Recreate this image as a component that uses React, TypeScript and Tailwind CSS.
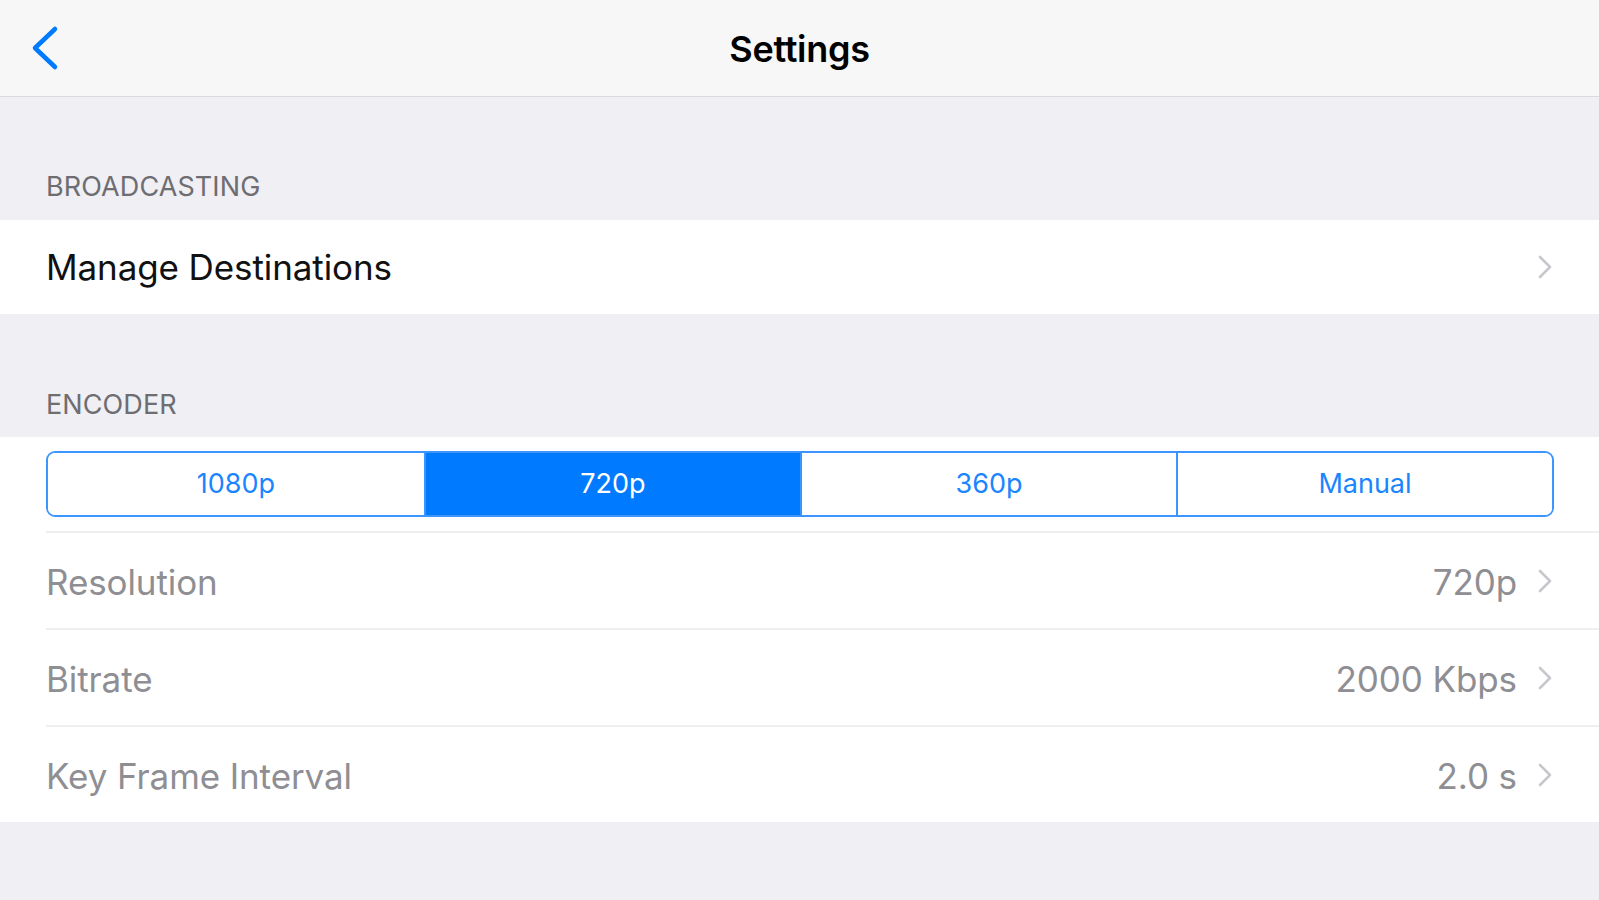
const rows = [
  { label: "Resolution", value: "720p" },
  { label: "Bitrate", value: "2000 Kbps" },
  { label: "Key Frame Interval", value: "2.0 s" },
];

const presets = ["1080p", "720p", "360p", "Manual"];

const Chevron = () => (
  <svg width="16" height="28" viewBox="0 0 16 28" fill="none" className="shrink-0">
    <path d="M3 4l10 10-10 10" stroke="#c7c7cc" strokeWidth="2.6" strokeLinecap="round" strokeLinejoin="round" />
  </svg>
);

const SectionLabel = ({ children, pb }: { children: string; pb: string }) => (
  <div className={"h-[123px] flex items-end px-[46px] " + pb}>
    <p className="text-[27px] leading-[30px] text-[#6d6d72] tracking-[0.1px]">{children}</p>
  </div>
);

export default function App() {
  return (
    <div className="min-h-screen w-full bg-[#efeff4] font-['Inter',sans-serif]">
      <header className="h-[97px] grid grid-cols-[1fr_auto_1fr] items-center bg-[#f7f7f7] border-b border-[#dadada]">
        <button className="pl-[30px] flex items-center">
          <svg width="30" height="46" viewBox="0 0 30 46" fill="none">
            <path d="M25 4L5 23l20 19" stroke="#007aff" strokeWidth="4.5" strokeLinecap="round" strokeLinejoin="round" />
          </svg>
        </button>
        <h1 className="text-[36px] font-semibold text-black tracking-[-0.3px] pt-[2px]">Settings</h1>
        <div />
      </header>

      <SectionLabel pb="pb-[18px]">BROADCASTING</SectionLabel>
      <div className="h-[94px] bg-white flex items-center justify-between pl-[46px] pr-[46px]">
        <p className="text-[35px] text-[#111] tracking-[-0.1px]">Manage Destinations</p>
        <Chevron />
      </div>

      <SectionLabel pb="pb-[17px]">ENCODER</SectionLabel>
      <div className="bg-white">
        <div className="pl-[46px] pr-[45px] pt-[14px] pb-[14px]">
          <div className="grid grid-cols-4 h-[66px] rounded-[9px] border-2 border-[#3d95ff] overflow-hidden">
            {presets.map((p, i) => (
              <div
                key={p}
                className={
                  "flex items-center justify-center text-[27px] " +
                  (i === 1 ? "bg-[#007aff] text-white" : "bg-white text-[#1a85ff]") +
                  (i > 0 ? " border-l-2 border-[#3d95ff]" : "")
                }
              >
                {p}
              </div>
            ))}
          </div>
        </div>
        <div className="pl-[46px]">
          {rows.map((r) => (
            <div
              key={r.label}
              className="h-[97px] flex items-center justify-between pr-[46px] border-t-2 border-[#efeff2]"
            >
              <p className="text-[35px] text-[#8e8e93] tracking-[-0.1px] pt-[3px]">{r.label}</p>
              <div className="flex items-center gap-[20px]">
                <p className="text-[35px] text-[#8e8e93] tracking-[-0.1px] pt-[3px]">{r.value}</p>
                <Chevron />
              </div>
            </div>
          ))}
        </div>
      </div>
    </div>
  );
}
